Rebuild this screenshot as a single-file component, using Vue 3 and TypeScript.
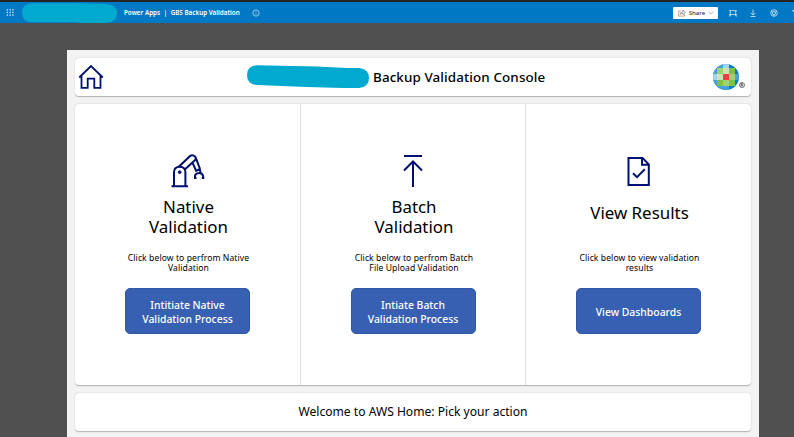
<script setup lang="ts">
interface Action {
  kind: 'robot' | 'upload' | 'report'
  title: string
  note: string
  button: string
}

const actions: Action[] = [
  {
    kind: 'robot',
    title: 'Native\nValidation',
    note: 'Click below to perfrom Native\nValidation',
    button: 'Intitiate Native\nValidation Process',
  },
  {
    kind: 'upload',
    title: 'Batch\nValidation',
    note: 'Click below to perfrom Batch\nFile Upload Validation',
    button: 'Intiate Batch\nValidation Process',
  },
  {
    kind: 'report',
    title: 'View Results',
    note: 'Click below to view validation\nresults',
    button: 'View Dashboards',
  },
]

const dots: number[] = [0, 1, 2, 3, 4, 5, 6, 7, 8]
</script>

<template>
  <div class="screen">
    <header class="bar">
      <svg class="waffle" viewBox="0 0 8 8">
        <rect v-for="d in dots" :key="d" :x="(d % 3) * 2.8 + 0.7" :y="Math.floor(d / 3) * 2.6 + 0.2" width="1.3" height="1.3" />
      </svg>
      <svg class="tenant" viewBox="0 0 95 20">
        <path d="M10 0.2H60L84 1Q95 1.5 95 10.5T84 20H60L54 19.3H10Q0 19 0 9.7T10 0.2Z" fill="#00a9ce" />
      </svg>
      <span class="crumb"><span>Power Apps</span><span class="pipe">|</span><span>GBS Backup Validation</span></span>
      <svg class="info" viewBox="0 0 8 8">
        <circle cx="4" cy="4" r="3.2" />
        <path d="M4 3.6V5.8M4 2.1V2.8" />
      </svg>
      <span class="grow"></span>
      <button class="share" type="button">
        <svg class="out" width="8" height="8" viewBox="0 0 8 8" fill="none" stroke-width=".6">
          <path d="M3 2H.7V7.1H6.5V5.2" stroke="#b06a38" />
          <path d="M2.2 5.3Q2.7 2.8 5 2.8V1L7.5 3.4L5 5.5V4.1Q3.2 4 2.2 5.3Z" stroke="#5a6272" />
        </svg>
        <span>Share</span>
        <svg class="chev" width="6" height="4" viewBox="0 0 6 4"><path d="M.5 .6L3 3.1L5.5 .6" /></svg>
      </button>
      <svg class="tool t1" viewBox="0 0 8 8"><path d="M0 1.7H8M0 5.6H8M1.3 1.7V7M6.7 1.7V7M0 7H1.3M6.7 7H8" /></svg>
      <svg class="tool t2" viewBox="0 0 8 8"><path d="M4 .5V6M1.8 3.9L4 6.1L6.2 3.9M1.5 7.5H6.5" /></svg>
      <svg class="tool t3" viewBox="0 0 8 8"><circle cx="4" cy="4" r="3.3" /><circle cx="4" cy="4" r="1.6" /><path d="M1.2 2.2L2.7 3.2M6.8 2.2L5.3 3.2M4 5.6V7.3" /></svg>
      <svg class="tool edge" viewBox="0 0 2 8"><path d="M.5 1.5H2M1.3 1.5V3" /></svg>
    </header>

    <main class="app">
      <section class="card head">
        <svg class="home" viewBox="0 0 26 26">
          <path d="M1.2 13.5L13 2L24.8 13.5M3.5 11.5V23.9H9.7V14.7H16.3V23.9H22.5V11.5" />
        </svg>
        <div class="brand">
          <svg class="redact" viewBox="0 0 122 24">
            <path d="M10 .2L70 1.6L100 3.1L112 3Q122 3.8 122 13T112 23L96 23L60 22L10 20.1Q0 19.3 0 10T10 .2Z" fill="#00a9ce" />
          </svg>
          <h1>Backup Validation Console</h1>
        </div>
        <div class="logo">
          <svg width="26" height="26" viewBox="0 0 26 26">
            <defs><clipPath id="disc"><circle cx="13" cy="13" r="13" /></clipPath></defs>
            <g clip-path="url(#disc)">
              <path fill="#087bc1" d="M0 0H26V26H0Z" />
              <path fill="#45a3db" d="M4 0H10V4H4ZM0 4H4V10H0ZM0 16H4V22H0ZM4 22H10V26H4ZM22 10H26V16H22ZM10 22H16V26H10Z" />
              <path fill="#a1d5ee" d="M10 0H16V4H10ZM0 10H4V16H0Z" />
              <path fill="#7fc241" d="M4 4H22V22H4Z" />
              <path fill="#9fd16e" d="M4 4H10V10H4ZM16 10H22V16H16ZM10 16H16V22H10Z" />
              <path fill="#cae4b3" d="M10 4H16V10H10ZM4 10H10V16H4Z" />
              <path fill="#ed4045" d="M10 10H16V16H10Z" />
            </g>
          </svg>
          <svg class="reg" width="6" height="6" viewBox="0 0 6 6"><circle cx="3" cy="3" r="2.5" /><path d="M2.2 4.5V1.7H3.3Q4.1 2.3 3.3 3H2.2M3.1 3L4 4.4" /></svg>
        </div>
      </section>

      <section class="card columns">
        <article v-for="a in actions" :key="a.kind" class="col" :class="a.kind">
          <div class="pic">
            <svg v-if="a.kind === 'robot'" width="36" height="34" viewBox="0 0 36 34">
              <path d="M1.5 32.3H18M4 32V18.3Q4 12.8 9.7 12.8T15.4 18.3V32" />
              <circle cx="9.7" cy="18.2" r="1.4" fill="#001070" stroke-width=".8" />
              <path d="M8.5 12.9L20.2 1.9Q22.7 .3 25 2.5Q26.7 4.5 24.9 6.2L14.8 15.5M26 4.3L29.8 14.5M22.3 8.3L26.5 17.5" />
              <path d="M26.1 16.8L29.8 15L30.5 18.6M25 23.5V21.8Q25.6 19 29 19Q33 18.9 33.3 23.5" />
              <path d="M24 24H26.5M31.8 24H34.2" />
            </svg>
            <svg v-else-if="a.kind === 'upload'" width="36" height="34" viewBox="0 0 36 34">
              <path d="M9 2H27M18 33V7.7M9 16.5L18 7.5L27 16.5" />
            </svg>
            <svg v-else width="36" height="34" viewBox="0 0 36 34">
              <path d="M7.5 4H21.5L27.8 10.3V31H7.5ZM21 4V10.7H27.5M12 19.3L16 23.2L23.8 15.3" />
            </svg>
          </div>
          <h2>{{ a.title }}</h2>
          <p>{{ a.note }}</p>
          <button class="go" type="button">{{ a.button }}</button>
        </article>
      </section>

      <section class="card foot"><span>Welcome to AWS Home: Pick your action</span></section>
    </main>
  </div>
</template>

<style>
body {
  margin: 0;
  overflow: hidden;
}
</style>

<style scoped>
.screen {
  width: 794px;
  height: 437px;
  overflow: hidden;
  background: #505050;
  font-family: "Noto Sans", "Open Sans", sans-serif;
  color: #000;
}
.bar {
  box-sizing: border-box;
  height: 23px;
  border-top: 2px solid #242424;
  background: #0078c4;
  display: flex;
  align-items: center;
  color: #fff;
}
.waffle { width: 8px; height: 8px; margin-left: 6px; fill: #e5f2fa; flex: none; overflow: visible; }
.tenant { width: 95px; height: 20px; margin-left: 8px; flex: none; }
.crumb {
  display: flex;
  width: 117px;
  margin-left: 7px;
  font-size: 6.3px;
  font-weight: 600;
  line-height: 12px;
  white-space: nowrap;
}
.pipe { margin: 0 3.5px; }
.info { width: 8px; height: 8px; margin-left: 11px; fill: none; stroke: #d9ecf8; stroke-width: .7; }
.grow { flex: 1; }
.share {
  box-sizing: border-box;
  width: 45px;
  height: 12px;
  margin: 0 11px 0 0;
  padding: 0 4px 0 5px;
  border: 0;
  border-radius: 1px;
  background: #fff;
  display: flex;
  align-items: center;
  justify-content: space-between;
  font: 500 6px/12px "Noto Sans", sans-serif;
  color: #333;
}
.share svg { flex: none; }
.chev path { fill: none; stroke: #7c8b97; stroke-width: .6; }
.tool { width: 8px; height: 8px; fill: none; stroke: #d5eaf7; stroke-width: .8; flex: none; }
.t2 { margin-left: 12px; }
.t3 { margin-left: 13px; }
.edge { width: 2px; margin-left: 14px; }
.app {
  box-sizing: border-box;
  width: 692px;
  height: 387px;
  margin: 27px 0 0 67px;
  padding: 8px 8px 0;
  background: #f3f3f3;
  display: flex;
  flex-direction: column;
  gap: 8px;
}
.card {
  box-sizing: border-box;
  background: #fff;
  border-radius: 4px;
  box-shadow: 0 .6px 1.2px rgba(0, 0, 0, .28);
  flex: none;
}
.head {
  height: 38px;
  display: grid;
  grid-template-columns: 172px 1fr 38px;
  align-items: center;
}
.home { width: 26px; height: 26px; margin-left: 3px; fill: none; stroke: #001070; stroke-width: 1.8; }
.brand { display: flex; align-items: center; }
.redact { width: 122px; height: 24px; margin-top: -1px; }
h1 {
  margin: 0 0 0 4px;
  font-size: 13.4px;
  font-weight: 500;
  line-height: 20px;
  letter-spacing: .12px;
  white-space: nowrap;
}
.logo { display: flex; align-items: flex-end; }
.logo svg { flex: none; }
.reg { margin-bottom: 2px; margin-left: -.5px; fill: none; stroke: #333; stroke-width: .7; }
.columns { height: 281px; display: grid; grid-template-columns: 225px 225px 226px; }
.col {
  box-sizing: border-box;
  display: flex;
  flex-direction: column;
  align-items: center;
  padding-top: 50px;
}
.col + .col { border-left: 1px solid #ddd; }
.pic { height: 34px; }
.pic svg { display: block; fill: none; stroke: #001070; stroke-width: 2; }
h2, p { margin: 0; text-align: center; white-space: pre; }
h2 {
  height: 40px;
  margin-top: 9px;
  padding-left: 2px;
  font-size: 16.9px;
  font-weight: 400;
  line-height: 20px;
}
.report h2 { height: 34px; padding-top: 6px; }
p {
  height: 20px;
  margin-top: 16px;
  padding-left: 2px;
  font-size: 8.6px;
  line-height: 10.2px;
  letter-spacing: .08px;
}
.go {
  box-sizing: border-box;
  width: 125px;
  height: 46px;
  margin: 15px 0 0;
  padding: 1px 0 0;
  border: 1px solid #3158a5;
  border-radius: 5px;
  background: #3860b2;
  color: #fff;
  text-align: center;
  white-space: pre;
  font: 500 10.4px/14px "Noto Sans", sans-serif;
}
.foot {
  height: 38px;
  display: flex;
  align-items: center;
  justify-content: center;
  font-size: 12.1px;
  line-height: 18px;
}
</style>
